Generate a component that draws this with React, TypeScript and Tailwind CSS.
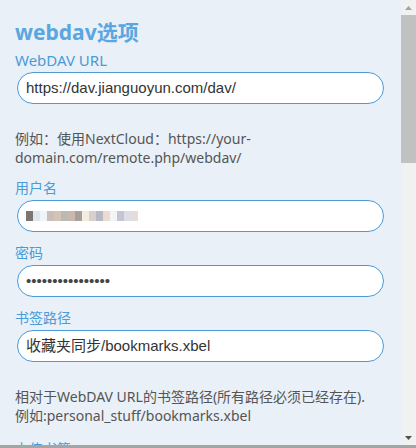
import React from 'react';

const font = { fontFamily: '"Noto Sans", "Noto Sans CJK SC", sans-serif' };
const arial = { fontFamily: '"Liberation Sans", "Noto Sans CJK SC", sans-serif' };

const Label: React.FC<{ text: string; cjk?: boolean }> = ({ text, cjk }) => (
  <div className={`pl-[15px] leading-[20px] text-[#4a9bd8] ${cjk ? 'text-[14px]' : 'text-[15px]'}`}>{text}</div>
);

const Field: React.FC<{ children: React.ReactNode }> = ({ children }) => (
  <div className="ml-[17px] mt-[2px] flex h-[32px] w-[367px] items-center rounded-full border border-[#4a9bd8] bg-white pl-[8px] text-[15px] text-[#333]">
    {children}
  </div>
);

// pixelated (blurred) username
const blur = ['#7d7670', '#dde8ef', '#eef4f8', '#c9beb9', '#d4c4b8', '#b9bab4', '#cbb8ad', '#a99f9a', '#f3ece0', '#d9cfcc', '#b8b8c4', '#ecdcd0', '#f4f4f6', '#c3c6d2', '#dcdde6', '#e7ddd6'];

export default function App() {
  return (
    <div className="flex h-[448px] w-[416px] flex-col overflow-hidden bg-[#e9f0f7]" style={font}>
      <div className="flex min-h-0 flex-1">
        {/* Content */}
        <div className="min-w-0 flex-1 pt-[17px]">
          <h1 className="pl-[15px] text-[21px] font-bold leading-[30px] text-[#5aa6e0]">webdav选项</h1>

          <div className="mt-[3px]">
            <Label text="WebDAV URL" />
            <Field>
              <span style={arial}>https://dav.jianguoyun.com/dav/</span>
            </Field>
          </div>

          <p className="mt-[25px] pl-[15px] pr-[30px] text-[14px] leading-[19px] text-[#555]">
            例如：使用NextCloud：https://your-domain.com/remote.php/webdav/
          </p>

          <div className="mt-[11px]">
            <Label text="用户名" cjk />
            <Field>
              <div className="flex h-[16px] items-center">
                {blur.map((c, i) => (
                  <span key={i} className="h-[10px] w-[7px]" style={{ backgroundColor: c }} />
                ))}
              </div>
            </Field>
          </div>

          <div className="mt-[11px]">
            <Label text="密码" cjk />
            <Field>
              <span className="text-[15px] text-[#444]" style={arial}>••••••••••••••••</span>
            </Field>
          </div>

          <div className="mt-[11px]">
            <Label text="书签路径" cjk />
            <Field>
              <span style={arial}>收藏夹同步/bookmarks.xbel</span>
            </Field>
          </div>

          <p className="mt-[25px] pl-[15px] pr-[10px] text-[14px] leading-[19px] text-[#555]">
            相对于WebDAV URL的书签路径(所有路径必须已经存在).
            <br />
            例如:personal_stuff/bookmarks.xbel
          </p>

          <div className="mt-[14px]">
            <Label text="上传书签" cjk />
          </div>
        </div>

        {/* Scrollbar */}
        <div className="flex w-[15px] shrink-0 flex-col bg-[#f1f1f1]">
          <div className="flex h-[15px] items-center justify-center">
            <svg width="7" height="4" viewBox="0 0 7 4">
              <path d="M0 4 L3.5 0 L7 4 Z" fill="#a3a3a3" />
            </svg>
          </div>
          <div className="h-[148px] bg-[#c1c1c1]" />
          <div className="flex-1" />
          <div className="flex h-[15px] items-center justify-center">
            <svg width="7" height="4" viewBox="0 0 7 4">
              <path d="M0 0 L7 0 L3.5 4 Z" fill="#505050" />
            </svg>
          </div>
        </div>
      </div>
      <div className="h-[3px] shrink-0 bg-[#a5a5a5]" />
    </div>
  );
}
